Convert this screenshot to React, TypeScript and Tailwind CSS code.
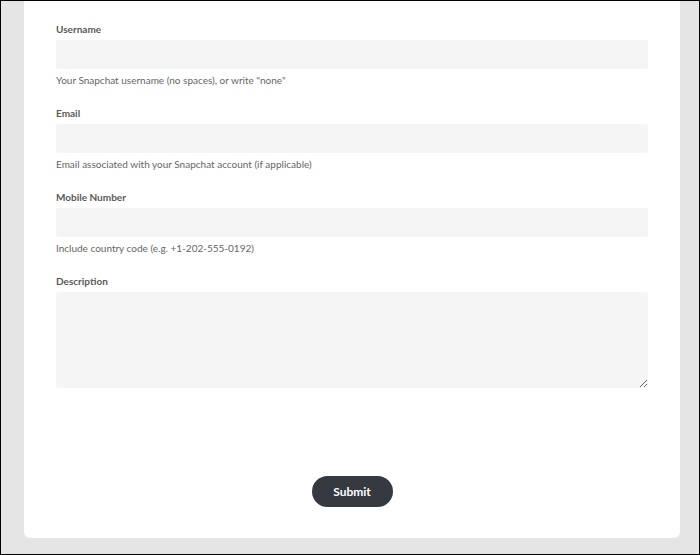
import React from "react";

type Field = {
  label: string;
  help?: string;
  multiline?: boolean;
};

const FIELDS: Field[] = [
  { label: "Username", help: 'Your Snapchat username (no spaces), or write "none"' },
  { label: "Email", help: "Email associated with your Snapchat account (if applicable)" },
  { label: "Mobile Number", help: "Include country code (e.g. +1-202-555-0192)" },
  { label: "Description", multiline: true },
];

const inputClassName =
  "block w-full rounded-[3px] bg-[#f5f5f5] px-2 text-[12px] text-[#333] outline-none";

function FormField({ field }: { field: Field }) {
  return (
    <div className="mb-[19px]">
      <label className="block text-[10px] font-bold leading-[14px] text-[#5a5a5a]">
        {field.label}
      </label>
      {field.multiline ? (
        <textarea className={`${inputClassName} mt-[4px] h-[96px] resize-y py-1`} />
      ) : (
        <input type="text" className={`${inputClassName} mt-[4px] h-[29px]`} />
      )}
      {field.help && (
        <p className="mt-[4px] text-[10px] leading-[14px] text-[#666]">{field.help}</p>
      )}
    </div>
  );
}

export default function App() {
  return (
    <div
      className="h-[555px] w-[700px] border border-black bg-[#e5e5e5]"
      style={{ fontFamily: "Lato, 'Open Sans', sans-serif" }}
    >
      <div className="ml-[23px] flex h-[537px] w-[656px] flex-col rounded-b-[6px] bg-white px-[32px] pt-[21px]">
        {FIELDS.map((field) => (
          <FormField key={field.label} field={field} />
        ))}
        <div className="mt-[69px] flex justify-center">
          <button
            type="button"
            className="h-[31px] w-[81px] rounded-full bg-[#343a40] text-[12px] font-bold text-white"
          >
            Submit
          </button>
        </div>
      </div>
    </div>
  );
}
